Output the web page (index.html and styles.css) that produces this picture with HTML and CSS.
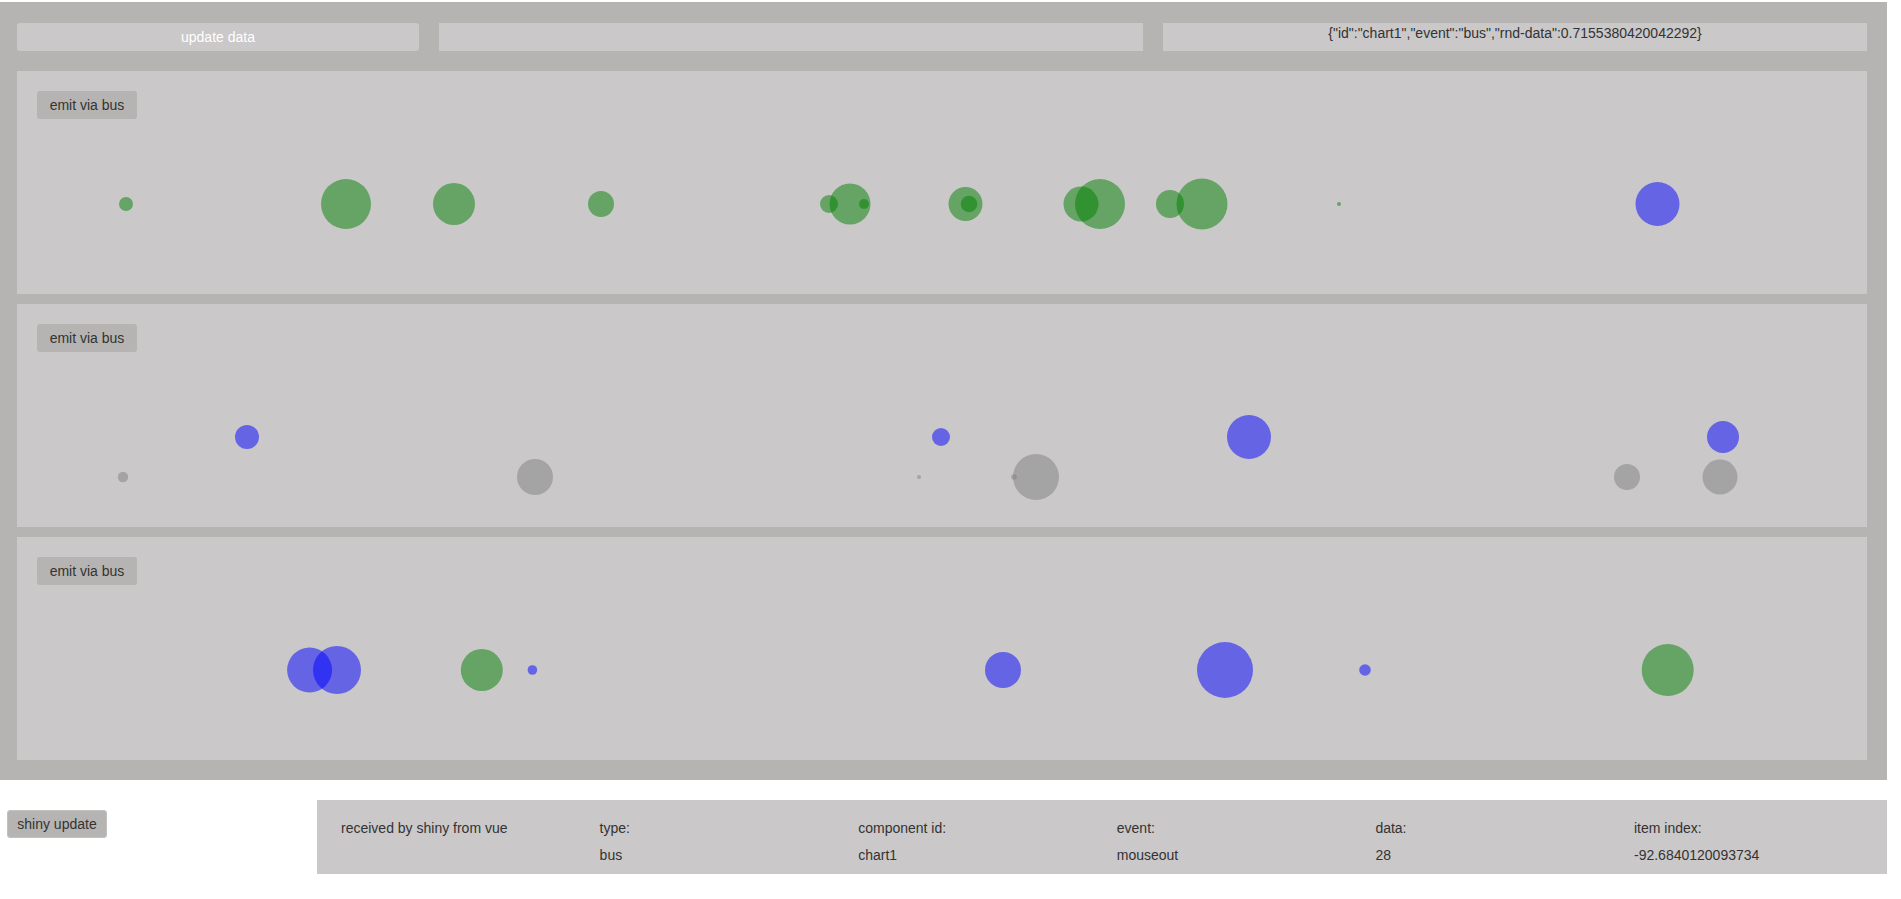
FILE: index.html
```html
<!DOCTYPE html>
<html>
<head>
<meta charset="utf-8">
<link rel="stylesheet" href="styles.css">
</head>
<body>
<div class="app">
  <div class="toprow">
    <button class="btn-update">update data</button>
    <div class="box"></div>
    <div class="box json">{"id":"chart1","event":"bus","rnd-data":0.7155380420042292}</div>
  </div>

  <div class="panel">
    <button class="btn-emit">emit via bus</button>
    <svg class="chart" width="1850" height="150">
      <g class="green">
        <circle cx="109" cy="75" r="7"/>
        <circle cx="329" cy="75" r="25"/>
        <circle cx="437" cy="75" r="21"/>
        <circle cx="584" cy="75" r="13"/>
        <circle cx="812" cy="75" r="9"/>
        <circle cx="833" cy="75" r="20.5"/>
        <circle cx="847" cy="75" r="5"/>
        <circle cx="948.5" cy="75" r="17"/>
        <circle cx="952" cy="75" r="8.3"/>
        <circle cx="1064" cy="75" r="17.5"/>
        <circle cx="1083" cy="75" r="25"/>
        <circle cx="1153" cy="75" r="14"/>
        <circle cx="1185" cy="75" r="25.5"/>
        <circle cx="1322" cy="75" r="2"/>
      </g>
      <g class="blue">
        <circle cx="1640.5" cy="75" r="22"/>
      </g>
    </svg>
  </div>

  <div class="panel">
    <button class="btn-emit">emit via bus</button>
    <svg class="chart" width="1850" height="150">
      <g class="gray">
        <circle cx="106" cy="115" r="5.2"/>
        <circle cx="518" cy="115" r="18"/>
        <circle cx="902" cy="115" r="2"/>
        <circle cx="997" cy="115" r="2.8"/>
        <circle cx="1019" cy="115" r="23"/>
        <circle cx="1610" cy="115" r="13"/>
        <circle cx="1703" cy="115" r="17.5"/>
      </g>
      <g class="blue">
        <circle cx="230" cy="75" r="12"/>
        <circle cx="924" cy="75" r="9"/>
        <circle cx="1232" cy="75" r="22"/>
        <circle cx="1706" cy="75" r="16"/>
      </g>
    </svg>
  </div>

  <div class="panel">
    <button class="btn-emit">emit via bus</button>
    <svg class="chart" width="1850" height="150">
      <g class="blue">
        <circle cx="292.6" cy="75" r="22.5"/>
        <circle cx="320" cy="75" r="24"/>
        <circle cx="515.4" cy="75" r="4.8"/>
        <circle cx="986" cy="75" r="18"/>
        <circle cx="1208" cy="75" r="28"/>
        <circle cx="1348" cy="75" r="5.8"/>
      </g>
      <g class="green">
        <circle cx="464.8" cy="75" r="21"/>
        <circle cx="1650.7" cy="75" r="26"/>
      </g>
    </svg>
  </div>
</div>

<div class="bottom">
  <div class="side">
    <button class="btn-shiny">shiny update</button>
  </div>
  <div class="info">
    <div>received by shiny from vue</div>
    <div>type:</div>
    <div>component id:</div>
    <div>event:</div>
    <div>data:</div>
    <div>item index:</div>
    <div></div>
    <div>bus</div>
    <div>chart1</div>
    <div>mouseout</div>
    <div>28</div>
    <div>-92.6840120093734</div>
  </div>
</div>
</body>
</html>
```

FILE: styles.css
```css
html, body {
  margin: 0;
  padding: 0;
  background: #ffffff;
}

body {
  font-family: "Liberation Sans", Arial, sans-serif;
  font-size: 14px;
  color: #333333;
}

button {
  font-family: "Liberation Sans", Arial, sans-serif;
  font-size: 14px;
  border: none;
  margin: 0;
  padding: 0;
  cursor: pointer;
}

.app {
  width: 1887px;
  box-sizing: border-box;
  margin-top: 2px;
  background: #b5b4b2;
  padding: 21px 20px 20px 17px;
  display: flex;
  flex-direction: column;
  gap: 10px;
}

.toprow {
  display: grid;
  grid-template-columns: 402px 1fr 1fr;
  gap: 20px;
  height: 28px;
  margin-bottom: 10px;
}

.btn-update {
  background: #cac8c9;
  color: #ffffff;
  height: 28px;
  border-radius: 3px;
  line-height: 28px;
}

.box {
  background: #cac8c9;
  height: 28px;
  box-sizing: border-box;
  padding-top: 2px;
  text-align: center;
  line-height: 16px;
  color: #333333;
}

.panel {
  background: #cac8c9;
  height: 223px;
  box-sizing: border-box;
  padding: 20px 0 15px;
  display: flex;
  flex-direction: column;
  align-items: flex-start;
}

.btn-emit {
  margin-left: 20px;
  width: 100px;
  height: 28px;
  background: #b5b4b2;
  color: #333333;
  border-radius: 3px;
}

.chart {
  display: block;
  margin-top: 10px;
}

.green circle {
  fill: #008000;
  fill-opacity: 0.5;
}

.blue circle {
  fill: #0000ff;
  fill-opacity: 0.5;
}

.gray circle {
  fill: #808080;
  fill-opacity: 0.5;
}

.bottom {
  display: flex;
  align-items: flex-start;
}

.side {
  width: 317px;
  box-sizing: border-box;
  padding: 30px 0 0 7px;
}

.btn-shiny {
  width: 100px;
  height: 28px;
  box-sizing: border-box;
  background: #b5b4b2;
  border: 1px solid #c2c1bf;
  border-radius: 3px;
  color: #333333;
}

.info {
  margin-top: 20px;
  width: 1570px;
  box-sizing: border-box;
  background: #cac8c9;
  padding: 15px 0 5px 24px;
  display: grid;
  grid-template-columns: repeat(5, 258.6px) 1fr;
  line-height: 27px;
}
```
